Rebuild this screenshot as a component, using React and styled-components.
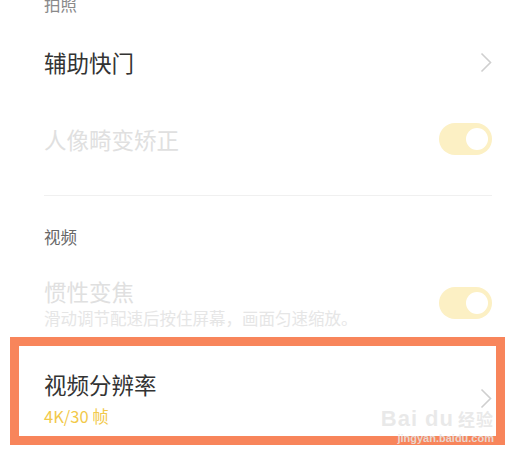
import React from 'react';
import styled, { createGlobalStyle } from 'styled-components';

const GlobalStyle = createGlobalStyle`
  html, body {
    margin: 0;
    padding: 0;
    background: #fff;
    overflow: hidden;
  }
  body {
    font-family: "Noto Sans CJK SC", "Noto Sans", sans-serif;
  }
`;

const Page = styled.div`
  width: 522px;
  height: 454px;
  box-sizing: border-box;
  padding: 0 30px 0 44px;
  overflow: hidden;
  position: relative;
`;

const SectionTitle = styled.div`
  font-size: 16.5px;
  line-height: 22px;
  color: ${(p) => p.$color || '#666'};
  margin-top: ${(p) => p.$top || 0}px;
  padding-top: ${(p) => p.$pad || 0}px;
`;

const Row = styled.div`
  display: flex;
  align-items: center;
  justify-content: space-between;
  height: ${(p) => (p.$height ? `${p.$height}px` : 'auto')};
  padding-top: ${(p) => p.$pt || 0}px;
  padding-bottom: ${(p) => p.$pb || 0}px;
`;

const TextCol = styled.div`
  display: flex;
  flex-direction: column;
`;

const Title = styled.div`
  font-size: 22.5px;
  line-height: 30px;
  color: ${(p) => (p.$disabled ? '#e0e0e0' : '#333')};
`;

const Sub = styled.div`
  font-size: 16.5px;
  line-height: 24px;
  margin-top: ${(p) => p.$gap || 0}px;
  color: ${(p) => p.$color || '#e6e6e6'};
`;

const Divider = styled.div`
  height: 1px;
  background: #f0f0f0;
  margin-top: 26px;
`;

const Toggle = styled.div`
  width: 53px;
  height: 32px;
  border-radius: 16px;
  background: #fcf0c4;
  display: flex;
  align-items: center;
  justify-content: flex-end;
  padding-right: 4px;
  box-sizing: border-box;
  flex-shrink: 0;
`;

const Knob = styled.div`
  width: 22px;
  height: 22px;
  border-radius: 50%;
  background: #fff;
`;

const Highlight = styled.div`
  margin: 0 -13px 0 -34px;
  border: 9px solid #f8855b;
  padding: 0 4px 0 25px;
`;

const Chevron = () => (
  <svg width="12" height="21" viewBox="0 0 12 21" fill="none">
    <polyline points="1.5,1.5 10.5,10.5 1.5,19.5" stroke="#cfcfcf" strokeWidth="1.6" />
  </svg>
);

const Watermark = styled.div`
  position: absolute;
  right: 28px;
  bottom: 9px;
  display: flex;
  flex-direction: column;
  align-items: flex-end;
  color: rgba(230, 230, 230, 0.85);
  font-family: "Liberation Sans", sans-serif;
  pointer-events: none;
`;

const MarkLogo = styled.div`
  font-size: 22px;
  line-height: 24px;
  font-weight: 700;
  letter-spacing: 1px;
  span {
    font-family: "Noto Sans CJK SC", sans-serif;
    font-size: 17px;
    margin-left: 4px;
  }
`;

const MarkUrl = styled.div`
  font-size: 11px;
  line-height: 14px;
  font-weight: 700;
`;

export default function App() {
  return (
    <>
      <GlobalStyle />
      <Page>
        <SectionTitle $top={-7} $color="#8a8a8a">拍照</SectionTitle>

        <Row $height={94}>
          <Title>辅助快门</Title>
          <Chevron />
        </Row>

        <Row $height={60}>
          <Title $disabled>人像畸变矫正</Title>
          <Toggle>
            <Knob />
          </Toggle>
        </Row>

        <Divider />

        <SectionTitle $pad={30}>视频</SectionTitle>

        <Row $pt={28} $pb={7}>
          <TextCol>
            <Title $disabled>惯性变焦</Title>
            <Sub>滑动调节配速后按住屏幕，画面匀速缩放。</Sub>
          </TextCol>
          <Toggle>
            <Knob />
          </Toggle>
        </Row>

        <Highlight>
          <Row $pt={23} $pb={8}>
            <TextCol>
              <Title>视频分辨率</Title>
              <Sub $gap={5} $color="#f2c94a">4K/30 帧</Sub>
            </TextCol>
            <Chevron />
          </Row>
        </Highlight>

        <Watermark>
          <MarkLogo>
            Bai du<span>经验</span>
          </MarkLogo>
          <MarkUrl>jingyan.baidu.com</MarkUrl>
        </Watermark>
      </Page>
    </>
  );
}
